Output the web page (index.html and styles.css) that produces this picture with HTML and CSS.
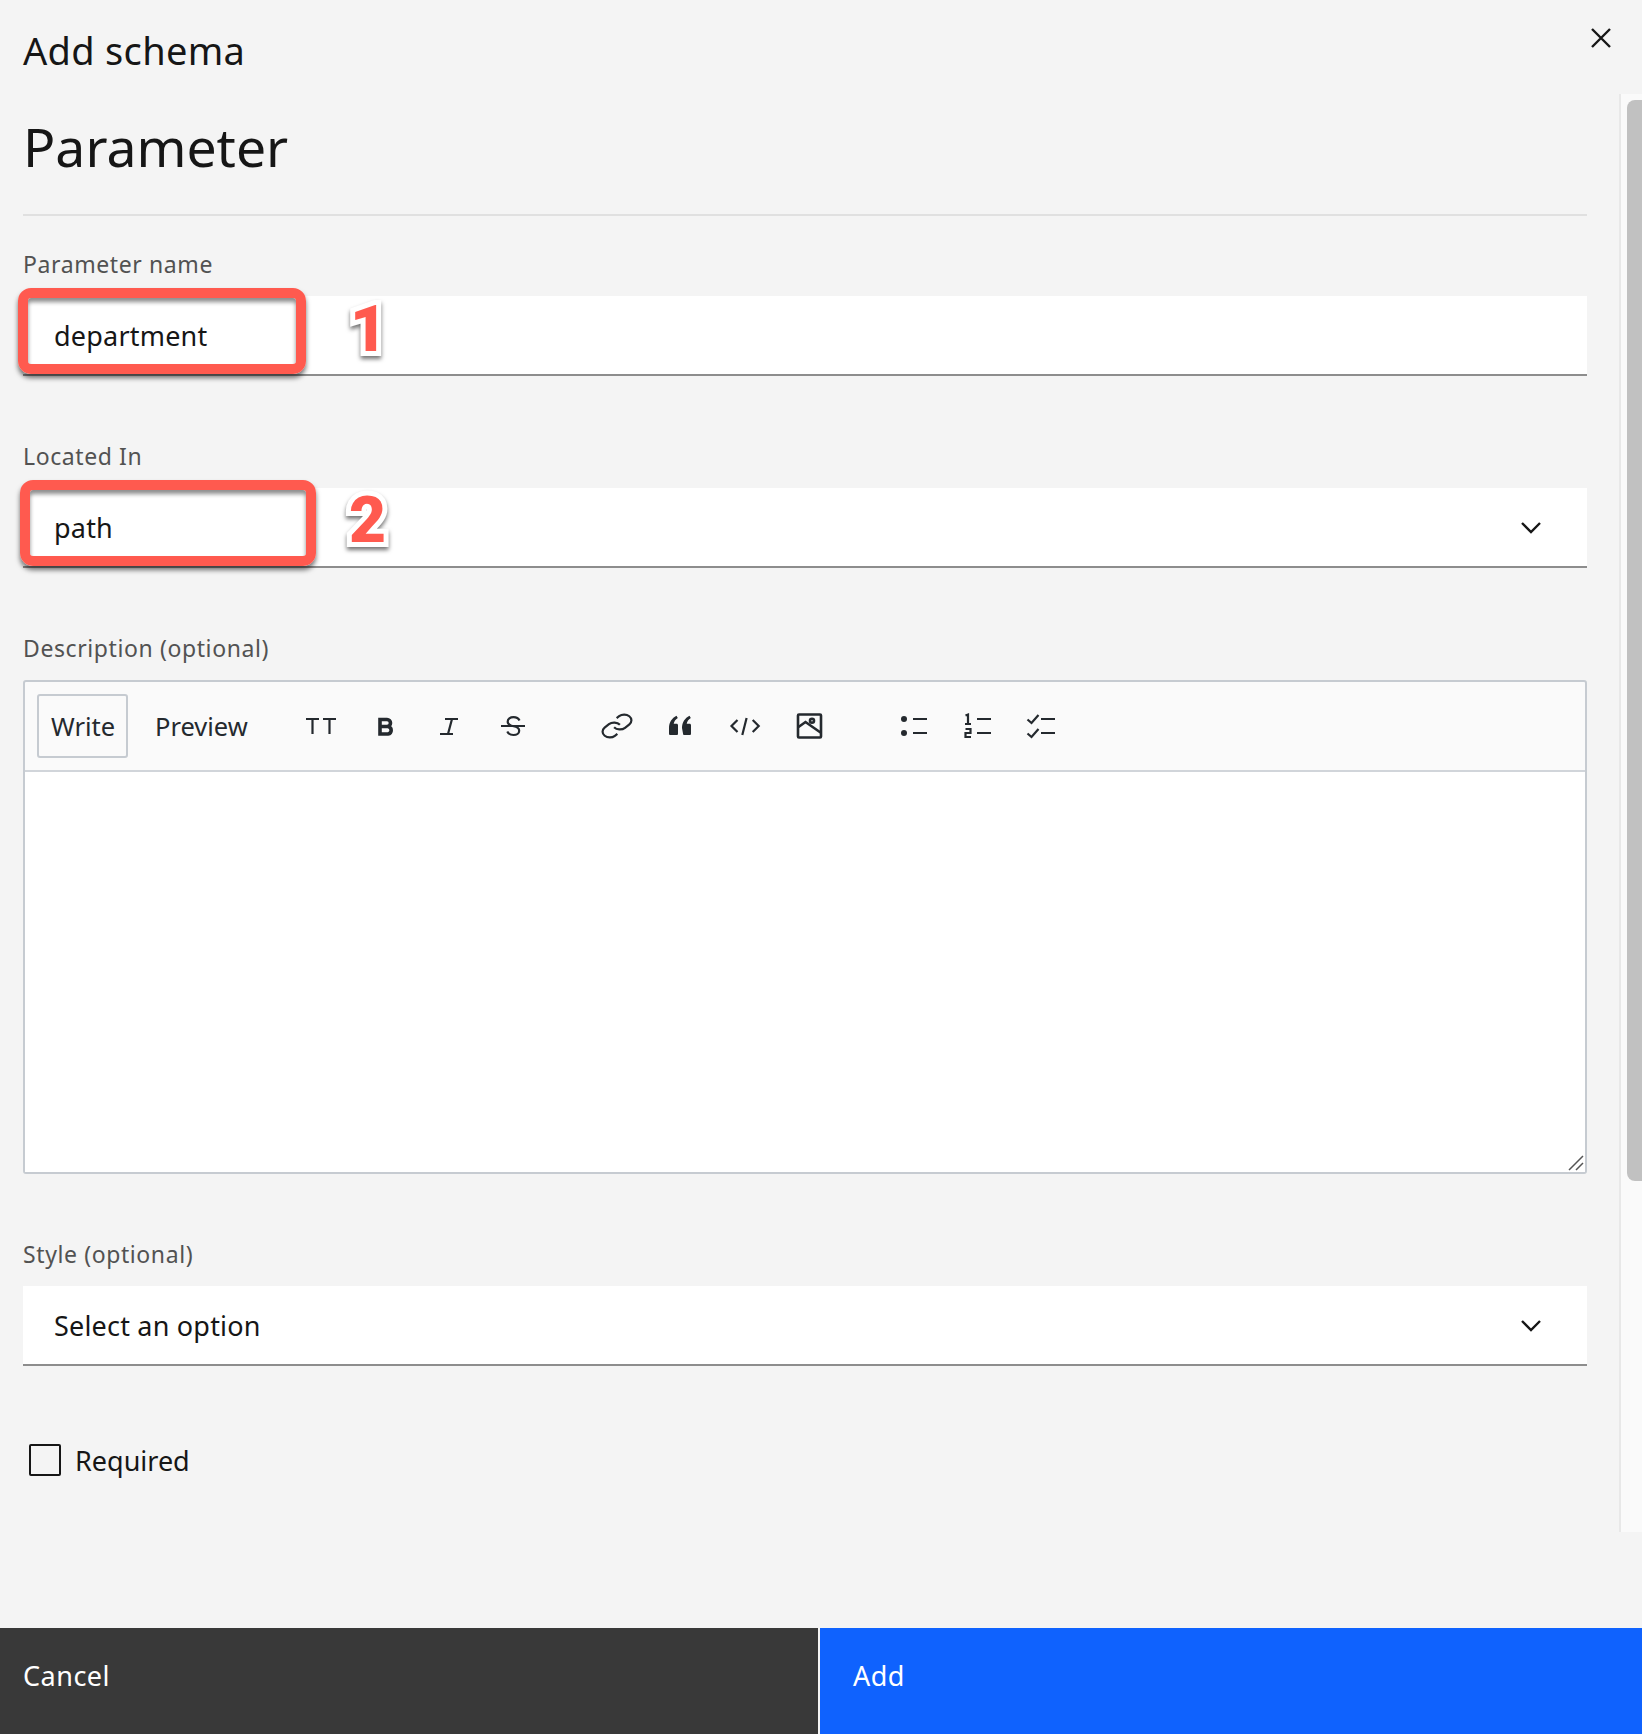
FILE: index.html
```html
<!doctype html>
<html lang="en">
  <head>
    <meta charset="utf-8">
    <title>Add schema</title>
    <link rel="stylesheet" href="styles.css">
  </head>

  <body>
    <div class="modal">
      <header class="modal-header">
        <h3 class="modal-label">Add schema</h3>
        <button class="close-btn" aria-label="Close">
          <svg width="20" height="20" viewBox="0 0 20 20"><path d="M1 1l18 18M19 1L1 19" /></svg>
        </button>
      </header>

      <div class="modal-body">
        <div class="content">
          <h2 class="section-title">Parameter</h2>

          <form class="form">
            <div class="group">
              <label class="label">Parameter name</label>
              <div class="field">department</div>
            </div>

            <div class="group">
              <label class="label">Located In</label>
              <div class="field">path
                <svg class="chevron" width="22" height="14" viewBox="0 0 22 14"><path d="M2 2l9 9 9-9" /></svg>
              </div>
            </div>

            <div class="group">
              <label class="label">Description (optional)</label>
              <div class="editor">
                <div class="toolbar">
                  <button type="button" class="tab tab-active">Write</button>
                  <button type="button" class="tab">Preview</button>

                  <div class="tools tools-first">
                    <svg class="tool" viewBox="0 0 32 32"><path d="M1 9h13M7.500 9v15M18 9h13M24.500 9v15" /></svg>
                    <svg class="tool tool-bold" viewBox="0 0 32 32"><path d="M11 9.500h7a3.500 3.500 0 0 1 0 7h-7zM11 16.500h8a3.800 3.800 0 0 1 0 7.500h-8z" /></svg>
                    <svg class="tool" viewBox="0 0 32 32"><path d="M12 9h13M7 24h13M19 9l-4 15" /></svg>
                    <svg class="tool" viewBox="0 0 32 32"><path d="M4 16h24M22.500 10.500c-1-2.200-3.200-3.300-6-3.300-3.300 0-5.800 1.800-5.800 4.500 0 3 2.800 3.900 6 4.600 3.100.7 5.500 1.700 5.500 4.400 0 2.700-2.500 4.300-5.700 4.300-2.900 0-5.200-1.200-6.200-3.500" /></svg>
                  </div>

                  <div class="tools">
                    <svg class="tool" viewBox="0 0 32 32"><g transform="translate(16 16) scale(1.45 1.15) translate(-12 -12)"><path class="thin" d="M10 13a5 5 0 0 0 7.540.540l3-3a5 5 0 0 0-7.070-7.070l-1.720 1.710" /><path class="thin" d="M14 11a5 5 0 0 0-7.540-.540l-3 3a5 5 0 0 0 7.070 7.070l1.710-1.710" /></g></svg>
                    <svg class="tool tool-fill" viewBox="0 0 32 32"><path d="M4 18c0-5.500 3-10 7.500-12.200l1.300 2.200c-2.300 1.500-3.800 3.500-4.100 5.800h2.800c1 0 1.500.6 1.500 1.500v8.200c0 1-.5 1.500-1.500 1.500H5.500c-1 0-1.500-.5-1.500-1.500zM17 18c0-5.500 3-10 7.500-12.200l1.300 2.200c-2.300 1.500-3.800 3.500-4.100 5.800h2.800c1 0 1.500.6 1.500 1.500v8.200c0 1-.5 1.500-1.500 1.500h-5c-1 0-1.500-.5-1.500-1.500z" /></svg>
                    <svg class="tool" viewBox="0 0 32 32"><path d="M8.500 10l-6 6 6 6M17.600 8l-4.300 17M23.700 10l6 6-6 6" /></svg>
                    <svg class="tool tool-image" viewBox="0 0 32 32"><rect x="5" y="4.500" width="23" height="23" rx="1" /><circle cx="19" cy="10.700" r="2" /><path d="M5.500 17l7-5 15 10.500" /></svg>
                  </div>

                  <div class="tools">
                    <svg class="tool" viewBox="0 0 32 32"><circle class="dot" cx="7" cy="9" r="3" /><circle class="dot" cx="7" cy="23" r="3" /><path d="M16 9h14M16 23h14" /></svg>
                    <svg class="tool" viewBox="0 0 32 32"><path d="M4.500 5.500l2.500-1V14M4 14h6M4.500 19h5v4h-5v4h5.500M16 9h14M16 23h14" /></svg>
                    <svg class="tool" viewBox="0 0 32 32"><path d="M2.500 9.500l4 3.500 7-8M2.500 23.500l4 3.500 7-8M16 9h14M16 23h14" /></svg>
                  </div>
                </div>
                <div class="editor-text">
                  <svg class="grip" width="16" height="16" viewBox="0 0 16 16"><path d="M1 15L15 1M8 15l7-7" /></svg>
                </div>
              </div>
            </div>

            <div class="group">
              <label class="label">Style (optional)</label>
              <div class="field">Select an option
                <svg class="chevron" width="22" height="14" viewBox="0 0 22 14"><path d="M2 2l9 9 9-9" /></svg>
              </div>
            </div>

            <div class="check-row">
              <span class="checkbox"></span>
              <span>Required</span>
            </div>
          </form>
        </div>

        <div class="scroll-track"><div class="scroll-thumb"></div></div>
      </div>

      <footer class="modal-footer">
        <button class="btn btn-cancel">Cancel</button>
        <button class="btn btn-add">Add</button>
      </footer>
    </div>

    <!-- red callouts on top of the screenshot -->
    <div class="callout callout-1"></div>
    <div class="callout callout-2"></div>
    <span class="step step-1">1</span>
    <span class="step step-2">2</span>
  </body>
</html>
```

FILE: styles.css
```css
* {
    box-sizing: border-box;
}

body {
    margin: 0;
    height: 1734px;
    overflow: hidden;
    background: #f4f4f4;
    color: #161616;
    font-family: "Noto Sans", sans-serif;
    position: relative;
}

button {
    font-family: inherit;
    border: 0;
    background: none;
    padding: 0;
}

.modal {
    display: flex;
    flex-direction: column;
    height: 1734px;
}

.modal-header {
    height: 94px;
    display: flex;
    justify-content: space-between;
    padding: 27px 31px 0 23px;
}

.close-btn {
    width: 20px;
    height: 20px;
    margin-top: 1px;
}

.modal-label {
    margin: 0;
    font-size: 38px;
    line-height: 46px;
    font-weight: 400;
    letter-spacing: .3px;
}

.close-btn svg {
    display: block;
    fill: none;
    stroke: #161616;
    stroke-width: 2.4;
}

.modal-body {
    display: flex;
    height: 1438px;
}

.content {
    flex: 1;
    padding: 0 32px 0 23px;
}

.section-title {
    margin: 0;
    padding: 17px 0 31px;
    font-size: 53.500px;
    line-height: 72px;
    font-weight: 400;
    border-bottom: 2px solid #e0e0e0;
}

.form {
    display: flex;
    flex-direction: column;
    gap: 66px;
    padding-top: 34px;
}

.label {
    display: block;
    height: 30px;
    margin-bottom: 16px;
    font-size: 23px;
    line-height: 28px;
    letter-spacing: .6px;
    color: #525252;
}

.field {
    height: 80px;
    padding-left: 31px;
    display: flex;
    align-items: center;
    justify-content: space-between;
    background: #fff;
    border-bottom: 2px solid #8d8d8d;
    font-size: 27px;
    letter-spacing: .2px;
}

.chevron {
    margin-right: 45px;
    margin-top: 2px;
    fill: none;
    stroke: #161616;
    stroke-width: 2.4;
}

.editor {
    height: 494px;
    display: flex;
    flex-direction: column;
    border: 2px solid #c6cbd1;
    border-radius: 3px;
    background: #fafafa;
}

.toolbar {
    height: 90px;
    display: flex;
    align-items: center;
    padding-left: 12px;
    border-bottom: 2px solid #d1d5da;
    color: #24292e;
}

.tab {
    height: 64px;
    padding: 0 13px;
    font-size: 25.500px;
    color: #24292e;
    border: 2px solid transparent;
    border-radius: 3px;
}

.tab-active {
    width: 91px;
    padding: 0 11px 0 12px;
    margin-right: 12px;
    border-color: #c6cbd1;
    text-align: left;
}

.tools {
    display: flex;
    gap: 32px;
    margin-left: 72px;
}

.tools-first {
    margin-left: 42px;
}

.tool {
    width: 32px;
    height: 32px;
    fill: none;
    stroke: #24292e;
    stroke-width: 2.2;
}

.tool-bold {
    stroke-width: 3.6;
}

.tool-fill {
    fill: #24292e;
    stroke: none;
}

.tool-image {
    stroke-width: 2.600;
}

.tool .dot {
    fill: #24292e;
    stroke: none;
}

.tool .thin {
    vector-effect: non-scaling-stroke;
}

.editor-text {
    flex: 1;
    position: relative;
    background: #fff;
}

.grip {
    position: absolute;
    right: 1px;
    bottom: 1px;
    fill: none;
    stroke: #555;
    stroke-width: 1.5;
}

.check-row {
    display: flex;
    align-items: center;
    gap: 14px;
    height: 32px;
    margin-top: 12px;
    margin-left: 6px;
    font-size: 27px;
}

.checkbox {
    width: 32px;
    height: 32px;
    border: 2px solid #161616;
    border-radius: 2px;
}

.scroll-track {
    width: 23px;
    padding: 6px 0 0 6px;
    background: #fafafa;
    border-left: 2px solid #e8e8e8;
}

.scroll-thumb {
    width: 15px;
    height: 1081px;
    background: #c1c1c1;
    border-radius: 8px 0 0 8px;
}

.modal-footer {
    height: 106px;
    margin-top: auto;
    display: flex;
    gap: 2px;
}

.btn {
    text-align: left;
    font-size: 27px;
    letter-spacing: .5px;
    color: #fff;
    padding-bottom: 11px;
}

.btn-cancel {
    width: 818px;
    padding-left: 23px;
    background: #393939;
}

.btn-add {
    flex: 1;
    padding-left: 33px;
    background: #0f62fe;
}

.callout {
    position: absolute;
    border: 10px solid #ff5a4f;
    border-radius: 13px;
    box-shadow: 0 4px 5px rgba(0, 0, 0, .55), inset 0 4px 4px rgba(0, 0, 0, .45);
}

.callout-1 {
    left: 18px;
    top: 288px;
    width: 288px;
    height: 86px;
}

.callout-2 {
    left: 20px;
    top: 480px;
    width: 296px;
    height: 86px;
}

.step {
    position: absolute;
    font-family: Roboto, sans-serif;
    font-weight: 900;
    font-size: 64px;
    line-height: 64px;
    color: #ff5a4f;
    -webkit-text-stroke: 10px #fff;
    paint-order: stroke fill;
    filter: drop-shadow(0 3px 2px rgba(0, 0, 0, .55));
}

.step-1 {
    left: 350px;
    top: 298px;
}

.step-2 {
    left: 349px;
    top: 489px;
}
```
